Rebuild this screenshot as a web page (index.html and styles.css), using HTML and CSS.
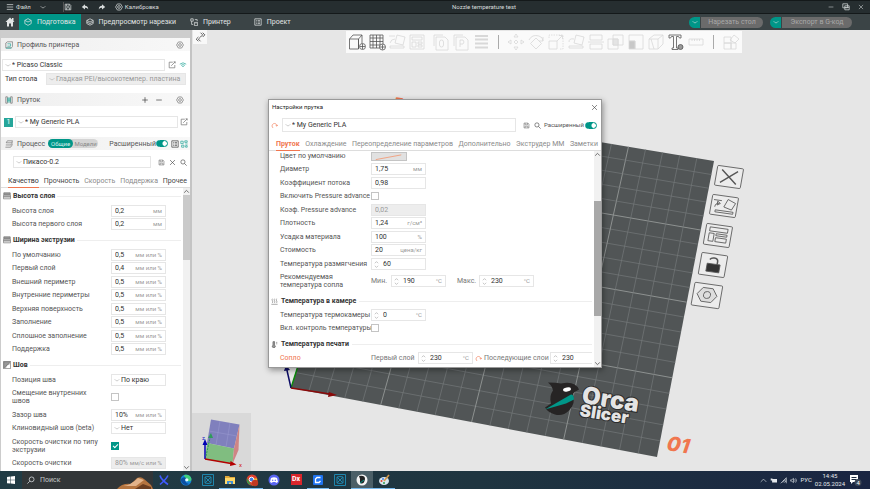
FILE: index.html
```html
<!DOCTYPE html>
<html lang="ru">

<head>
  <meta charset="UTF-8">
  <meta name="viewport" content="width=device-width, initial-scale=1.0">
  <title>Nozzle temperature test</title>
  <link rel="stylesheet" href="styles.css">
</head>

<body>

  <!-- общие иконки -->
  <svg class="defs" width="0" height="0">
    <symbol id="i-down" viewBox="0 0 10 10"><path d="M1 3.5 Q3 6.5 5 6.5 T9 3.5" /></symbol>
    <symbol id="i-gear" viewBox="0 0 10 10"><path d="M3 1.2h4L9.3 5 7 8.8H3L.7 5z" /><circle cx="5" cy="5" r="1.7" /></symbol>
    <symbol id="i-save" viewBox="0 0 10 10"><path d="M1.5 1.5h5.5l1.5 1.500v5.500h-7zM3 1.500v2.500h3.500v-2.500M3 8.500v-2.500h4v2.500" /></symbol>
    <symbol id="i-search" viewBox="0 0 10 10"><circle cx="4.200" cy="4.200" r="3" /><path d="M6.500 6.500L9.500 9.500" /></symbol>
    <symbol id="i-x" viewBox="0 0 10 10"><path d="M1.500 1.500l7 7M8.500 1.500l-7 7" /></symbol>
    <symbol id="i-edit" viewBox="0 0 10 10"><path d="M6 1.500H1.500v7h7V5M4 6L9 1M7 1h2v2" /></symbol>
    <symbol id="i-cube" viewBox="0 0 10 10"><path d="M5 .8L9 3v4L5 9.200 1 7V3zM1 3l4 2 4-2" /></symbol>
    <symbol id="i-layers" viewBox="0 0 10 10"><path d="M3 1h6.500L8 3.500H1.500zM1 6.200h6.500L9.500 3M.5 9h6.500L9.500 5.500" /></symbol>
    <symbol id="i-reset" viewBox="0 0 10 10"><path d="M3 8.500A3.500 3.500 0 1 1 8.500 5.500M6.500 4.500l2 1.500 1.200-2" /></symbol>
    <symbol id="i-spin" viewBox="0 0 6 10"><path d="M1 3.500l2-2 2 2M1 6.500l2 2 2-2" /></symbol>
    <symbol id="i-list" viewBox="0 0 10 10"><path d="M1 1h8v8H1zM2.500 3h1M4.500 3h3M2.500 5h1M4.500 5h3M2.500 7h1M4.500 7h3" /></symbol>
    <symbol id="i-rows" viewBox="0 0 10 10"><path class="fill" d="M1 1h8v2.500H1z" /><path d="M.5 4h9v2h-9zM.5 6h9v2.500h-9z" /></symbol>
  </svg>

  <header class="titlebar">
    <div class="titlebar-left">
      <button class="bar-btn"><svg class="icon" viewBox="0 0 10 10"><path d="M1 2h8M1 5h8M1 8h8" /></svg>Файл</button>
      <button class="bar-btn" aria-label="Меню"><svg class="icon icon-s"><use href="#i-down" /></svg></button>
      <span class="sep"></span>
      <button class="bar-btn" aria-label="Сохранить"><svg class="icon"><use href="#i-save" /></svg></button>
      <button class="bar-btn" aria-label="Отменить"><svg class="icon icon-fill" viewBox="0 0 10 10"><path d="M5 1.500L1 5l4 3V6q3-.5 4 2Q9 3.500 5 3.500z" /></svg></button>
      <button class="bar-btn" aria-label="Повторить"><svg class="icon icon-fill" viewBox="0 0 10 10"><path d="M5 1.500L9 5 5 8V6Q2 5.500 1 8 1 3.500 5 3.500z" /></svg></button>
      <button class="bar-btn calib"><svg class="icon"><use href="#i-gear" /></svg>Калибровка</button>
    </div>
    <div class="titlebar-name">Nozzle temperature test</div>
    <div class="titlebar-right">
      <button class="bar-btn" aria-label="Свернуть"><svg class="icon icon-s" viewBox="0 0 10 10"><path d="M1 5h8" /></svg></button>
      <button class="bar-btn" aria-label="Развернуть"><svg class="icon" viewBox="0 0 10 10"><path d="M1 1h6v5H1zM3.500 3.500H9V8.500H3.500zM3.500 5.500H9" /></svg></button>
      <button class="bar-btn" aria-label="Закрыть"><svg class="icon icon-s"><use href="#i-x" /></svg></button>
    </div>
  </header>

  <nav class="nav">
    <button class="nav-home" aria-label="Домой"><svg class="icon icon-l icon-fill" viewBox="0 0 10 10"><path d="M5 .5L.5 5H2v4.500h2V6.500h2v3h2V5h1.500L8.500 4V1H7v1.500z" /></svg></button>
    <button class="nav-tab active"><svg class="icon"><use href="#i-cube" /></svg>Подготовка</button>
    <button class="nav-tab"><svg class="icon" viewBox="0 0 10 10"><path d="M5 1l4 2-4 2-4-2zM1 5l4 2 4-2M1 7l4 2 4-2M1 3v4M9 3v4" /></svg>Предпросмотр нарезки</button>
    <button class="nav-tab nav-printer"><svg class="icon" viewBox="0 0 10 10"><path d="M1 1h3v3H1zM2 4v4h2M6 2h3v2M5.500 5.500h4v4h-4zM7 7h1" /></svg>Принтер</button>
    <button class="nav-tab nav-project"><svg class="icon"><use href="#i-list" /></svg>Проект</button>
    <div class="nav-actions">
      <div class="split"><button class="split-caret" aria-label="Режим нарезки"><svg class="icon icon-s"><use href="#i-down" /></svg></button><button class="split-main">Нарезать стол</button></div>
      <div class="split"><button class="split-caret" aria-label="Режим экспорта"><svg class="icon icon-s"><use href="#i-down" /></svg></button><button class="split-main split-wide">Экспорт в G-код</button></div>
    </div>
  </nav>

  <main class="main">

    <aside class="sidebar">
      <div class="sidebar-top"></div>

      <div class="panel-head">
        <svg class="icon" viewBox="0 0 10 10"><path d="M1 2.500L3 1h6.500v6L8 8.500H1z" /><path class="teal" d="M3 3.500h4v3H3M1 9h7" /></svg>
        <span class="panel-title">Профиль принтера</span>
        <button class="plain" aria-label="Настройки принтера"><svg class="icon"><use href="#i-gear" /></svg></button>
      </div>
      <div class="line line-printer">
        <div class="combo"><svg class="icon icon-s"><use href="#i-down" /></svg><select aria-label="Профиль принтера"><option>* Picaso Classic</option></select></div>
        <button class="plain" aria-label="Изменить"><svg class="icon"><use href="#i-edit" /></svg></button>
        <button class="plain" aria-label="Сеть"><svg class="icon" viewBox="0 0 10 10"><path class="teal" d="M1 4q4-3.500 8 0M2.500 5.500q2.500-2 5 0M4 7q1-1 2 0" /></svg></button>
      </div>
      <div class="line line-bed">
        <label for="bed">Тип стола</label>
        <div class="combo disabled"><svg class="icon icon-s"><use href="#i-down" /></svg><select id="bed" disabled><option>Гладкая PEI/высокотемпер. пластина</option></select></div>
      </div>

      <div class="panel-head">
        <svg class="icon" viewBox="0 0 10 10"><path d="M1 1h2v8H1zM7 1h2v8H7z" /><path class="teal" d="M3.500 2.500h3v5h-3zM3.500 4h3M3.500 5.500h3" /></svg>
        <span class="panel-title">Пруток</span>
        <button class="plain" aria-label="Добавить"><svg class="icon dark" viewBox="0 0 10 10"><path d="M5 1.500v7M1.500 5h7" /></svg></button>
        <button class="plain plain-gap" aria-label="Удалить"><svg class="icon dark" viewBox="0 0 10 10"><path d="M1.500 5h7" /></svg></button>
        <button class="plain" aria-label="Настройки прутка"><svg class="icon"><use href="#i-gear" /></svg></button>
      </div>
      <div class="line line-filament">
        <span class="badge">1</span>
        <div class="combo"><svg class="icon icon-s"><use href="#i-down" /></svg><select aria-label="Пруток"><option>* My Generic PLA</option></select></div>
        <button class="plain" aria-label="Изменить"><svg class="icon"><use href="#i-edit" /></svg></button>
      </div>

      <div class="panel-head panel-process">
        <svg class="icon"><use href="#i-layers" /></svg>
        <span class="process-title">Процесс</span>
        <div class="segment"><button class="on">Общие</button><button>Модели</button></div>
        <label class="adv-label" for="adv">Расширенный</label>
        <input class="toggle" type="checkbox" id="adv" checked>
        <svg class="icon dark"><use href="#i-list" /></svg>
        <svg class="icon" viewBox="0 0 10 10"><path class="teal" d="M1 1.500h3v3H1zM6 1h3v2H6zM2 6.500h3v2.500H2zM6.500 5h3M7 7h2v2H7z" /></svg>
      </div>
      <div class="line line-process">
        <div class="combo"><svg class="icon icon-s"><use href="#i-down" /></svg><select aria-label="Профиль процесса"><option>Пикасо-0.2</option></select></div>
        <button class="plain" aria-label="Сохранить"><svg class="icon icon-m"><use href="#i-save" /></svg></button>
        <button class="plain" aria-label="Удалить"><svg class="icon icon-m dark"><use href="#i-x" /></svg></button>
        <button class="plain" aria-label="Поиск"><svg class="icon icon-m dark"><use href="#i-search" /></svg></button>
      </div>

      <div class="tabs">
        <button class="tab active">Качество</button>
        <button class="tab strong">Прочность</button>
        <button class="tab">Скорость</button>
        <button class="tab">Поддержка</button>
        <button class="tab strong">Прочее</button>
      </div>

      <div class="scroll">
        <div class="scroll-body">
          <h3 class="group"><svg class="icon"><use href="#i-rows" /></svg>Высота слоя</h3>
          <div class="fields">
            <div class="field"><label for="q1">Высота слоя</label><div class="box"><input id="q1" value="0,2"><span>мм</span></div></div>
            <div class="field"><label for="q2">Высота первого слоя</label><div class="box"><input id="q2" value="0,2"><span>мм</span></div></div>
          </div>

          <h3 class="group"><svg class="icon"><use href="#i-rows" /></svg>Ширина экструзии</h3>
          <div class="fields">
            <div class="field"><label for="w1">По умолчанию</label><div class="box"><input id="w1" value="0,5"><span>мм или %</span></div></div>
            <div class="field"><label for="w2">Первый слой</label><div class="box"><input id="w2" value="0,4"><span>мм или %</span></div></div>
            <div class="field"><label for="w3">Внешний периметр</label><div class="box"><input id="w3" value="0,5"><span>мм или %</span></div></div>
            <div class="field"><label for="w4">Внутренние периметры</label><div class="box"><input id="w4" value="0,5"><span>мм или %</span></div></div>
            <div class="field"><label for="w5">Верхняя поверхность</label><div class="box"><input id="w5" value="0,5"><span>мм или %</span></div></div>
            <div class="field"><label for="w6">Заполнение</label><div class="box"><input id="w6" value="0,5"><span>мм или %</span></div></div>
            <div class="field"><label for="w7">Сплошное заполнение</label><div class="box"><input id="w7" value="0,5"><span>мм или %</span></div></div>
            <div class="field"><label for="w8">Поддержка</label><div class="box"><input id="w8" value="0,5"><span>мм или %</span></div></div>
          </div>

          <h3 class="group"><svg class="icon" viewBox="0 0 10 10"><path class="fill" d="M1 1h8L1 9z" /><path d="M.5 .5h9v9h-9zM3 9q0-4 6-6" /></svg>Шов</h3>
          <div class="fields">
            <div class="field"><label for="s1">Позиция шва</label><div class="combo"><svg class="icon icon-s"><use href="#i-down" /></svg><select id="s1"><option>По краю</option></select></div></div>
            <div class="field tall"><label for="s2">Смещение внутренних швов</label><input class="check" type="checkbox" id="s2"></div>
            <div class="field"><label for="s3">Зазор шва</label><div class="box"><input id="s3" value="10%"><span>мм или %</span></div></div>
            <div class="field"><label for="s4">Клиновидный шов (beta)</label><div class="combo"><svg class="icon icon-s"><use href="#i-down" /></svg><select id="s4"><option>Нет</option></select></div></div>
            <div class="field tall"><label for="s5">Скорость очистки по типу экструзии</label><input class="check" type="checkbox" id="s5" checked></div>
            <div class="field"><label for="s6">Скорость очистки</label><div class="box disabled"><input id="s6" value="80%" disabled><span>мм/с или %</span></div></div>
          </div>
        </div>
        <div class="scrollbar">
          <svg viewBox="0 0 6 6"><path d="M1 4l2-2 2 2" /></svg>
          <div class="thumb"></div>
          <svg class="arrow-end" viewBox="0 0 6 6"><path d="M1 2l2 2 2-2" /></svg>
        </div>
      </div>
    </aside>

    <section class="viewport">
      <svg class="scene" viewBox="192 30 678 441" preserveAspectRatio="xMinYMin slice">
        <path class="plate" d="M291 388L657 457 714 161 378 105z" />
        <g id="grid"></g>

        <!-- оси -->
        <path d="M291 388L298 366" stroke="#0b8a0b" stroke-width="1.500" />
        <path d="M291 388L286 366" stroke="#0c0c66" stroke-width="1.500" />
        <path d="M284 371l2-6 4 5z" fill="#0c0c66" />
        <path d="M291 388L330 394" stroke="#8b0a0a" stroke-width="1.500" />
        <path d="M329 392l8 3-9 2z" fill="#8b0a0a" />

        <!-- логотип -->
        <path d="M548 382.500q8 0 13 1 14-3 18 6-4 2-6 4 3 10-4 17-6 6-14 4-7-2-10-7l6-4q-2-8 2-13-1-5-5-8z" fill="#262424" />
        <path d="M545 409.500l26-15q3 0 3 5l-8 4z" fill="#009688" />
        <ellipse cx="567" cy="389.500" rx="4" ry="2" transform="rotate(-10 567 389.500)" fill="#fff" />
        <g class="brand">
          <text x="581" y="403" font-size="24" transform="rotate(9 581 403)">Orca</text>
          <text x="579" y="416" font-size="17" transform="rotate(9 579 416)">Slicer</text>
        </g>
        <text class="plate-no" x="666" y="450" transform="rotate(9 666 450)">01</text>
        <text class="plate-name" x="393" y="107" transform="rotate(8 393 107)">Бе</text>

        <!-- кнопки стола -->
        <g class="plate-btn" transform="translate(729 177) rotate(8) skewX(-2)">
          <rect x="-13" y="-10" width="26" height="20" rx="1" /><path d="M-8-6.500L8 6.500M8-6.500L-8 6.500" stroke-width="1.400" />
        </g>
        <g class="plate-btn" transform="translate(724 206) rotate(8) skewX(-2)">
          <rect x="-13" y="-10" width="26" height="20" rx="1" /><path d="M0 1L3-7 11-4 8 3zM-8 5h18v2H-8zM-11-5h8M-9 2q0-4 4-4M-7-4l3 2-3 2z" />
        </g>
        <g class="plate-btn" transform="translate(718 235) rotate(8) skewX(-2)">
          <rect x="-13" y="-10" width="26" height="21" rx="1" /><path d="M-9-7H9v4H-9zM-9-1h5v8h-5zM-2-1H9v2H-2zM-2 3H9v4H-2z" />
        </g>
        <g class="plate-btn" transform="translate(713 265) rotate(8) skewX(-2)">
          <rect x="-13" y="-11" width="26" height="22" rx="1" /><path d="M-6-1H7v8H-6z" fill="#333" /><path d="M4-1v-3q0-3-4-3-3 0-4 2" stroke-width="1.500" />
        </g>
        <g class="plate-btn" transform="translate(707 295) rotate(8) skewX(-2)">
          <rect x="-14" y="-11" width="28" height="23" rx="1" /><path d="M-5-7H5L10 0 5 7H-5L-10 0z" fill="#ddd" /><circle r="3.500" />
        </g>

        <!-- кубик навигации -->
        <path d="M192 413h59v58h-59z" fill="#d9d9d9" />
        <path d="M211 419.500L239.500 424.500 234 448.500 207 443z" fill="#8080bd" />
        <path d="M207 443L234 448.500 232.500 464 205 459z" fill="#80bd80" />
        <path d="M239.500 424.500L234 448.500 232.500 464 238.500 450z" fill="#cf8585" />
        <path d="M209 431l28 5M220 421l-4 24M230 423l-4 24" stroke="#9a9ad0" stroke-width=".5" />
        <path d="M205 459V443" stroke="#0000b4" stroke-width="1.500" /><path d="M202.500 445l2.500-6 2.500 6z" fill="#0000b4" />
        <path d="M205 459L231 463.500" stroke="#b40000" stroke-width="1.500" /><path d="M230.500 461l6 3.500-6.500 1.500z" fill="#b40000" />
        <path d="M206 456l4-18" stroke="#2f9a5a" stroke-dasharray="2 1" /><path d="M208 438l3-5 2 5z" fill="#2f9a5a" />
        <text x="202" y="440" font-size="6" fill="#2222c8">z</text>
        <text x="239" y="467" font-size="6" fill="#d22222">x</text>
      </svg>

      <button class="collapse" aria-label="Свернуть панель"><svg viewBox="0 0 13 13"><path d="M5 6.500L3 8.500l2 2M7 6.500l-2 2 2 2M7 2.500l2 2-2 2M9 2.500l2 2-2 2" /></svg></button>

      <div class="toolbar">
        <svg class="on" viewBox="0 0 20 20"><path d="M2.500 7h9v10h-9zM2.500 7L6 3h9l-3.500 4M15 3v9M11.500 17V7" /><circle cx="15.500" cy="14.500" r="3" fill="#fafafa" /><path d="M13 14.500h5M15.500 12v5" /></svg>
        <svg class="on" viewBox="0 0 20 20"><path d="M3 3h13v13H3zM6 3v13M9.500 3v13M13 3v13M3 6h13M3 9.500h13M3 13h13" /><circle cx="15.500" cy="15" r="3" fill="#fafafa" /><path d="M13 15h5M15.500 12.500v5" /></svg>
        <svg viewBox="0 0 20 20"><path d="M8 11L10 3l8 2-2 8zM3 14h14v2H3zM2 4h6M3 11q1-4 5-4" /></svg>
        <svg viewBox="0 0 20 20"><path d="M3 3h14v14H3zM5 5h10v3H5zM5 10h4v5H5zM11 10h4v2h-4zM11 13h4v2h-4z" /></svg>
        <svg class="tb-gap" viewBox="0 0 20 20"><path d="M3 14V3h9M5 5h9l3 3v10H5z" /><rect x="8.500" y="8" width="4" height="7" rx="2" /></svg>
        <svg viewBox="0 0 20 20"><path d="M3 14V3h9M5 5h9l3 3v10H5zM9 15V8h3q2 2 0 4H9" /></svg>
        <svg viewBox="0 0 20 20"><path d="M4 4h13M4 7.500h13M4 11.500h13M4 15.500h13" stroke-width="2" /></svg>
        <span class="tb-sep"></span>
        <svg viewBox="0 0 20 20"><path d="M10 8l2 2-2 2-2-2zM10 2l2 3H8zM10 18l2-3H8zM2 10l3-2v4zM18 10l-3-2v4z" /></svg>
        <svg viewBox="0 0 20 20"><path d="M10 6l5.500 5.500L10 17l-5.500-5.500zM3 8q3-6 10-4M17 5v4h-4M17 9q0-4-4-5" /></svg>
        <svg viewBox="0 0 20 20"><path d="M3 9h8v8H3zM11 9l5-5M13 3.500h3.500V7" /><path d="M3 6V3h14v14h-3" stroke-dasharray="1.500 1" /></svg>
        <svg viewBox="0 0 20 20"><path d="M8 11L10 3l8 2-2 8zM3 14h14v2H3zM3 10q0-4 5-3" /></svg>
        <svg viewBox="0 0 20 20"><path d="M4 3h12v5H4zM4 12h12v5H4zM2 10h16" /></svg>
        <svg viewBox="0 0 20 20"><path d="M2 7h10v10H2zM7 3h10v10H7z" /><path d="M7 7h5v6H7z" fill="#e4e4e4" /></svg>
        <svg viewBox="0 0 20 20"><path d="M3 3h14v14h-8V9H3z" /><path d="M3 9h6v8H3z" fill="#c8c8c8" /></svg>
        <svg viewBox="0 0 20 20"><path d="M3 7h9v10H3zM3 7l5-4h9l-5 4M17 3v9l-5 5M5 7l3 10" /></svg>
        <svg class="on" viewBox="0 0 20 20"><path d="M3 3h12v3h-1.500l-1-1.500H10.500V16H12v1.500H6V16h1.500V4.500H5.500L4.500 6H3z" /><circle cx="14.500" cy="15" r="2.500" fill="#999" /></svg>
        <svg viewBox="0 0 20 20"><path d="M3 7h14v6H3zM6 7v2M8.500 7v2M11 7v2M13.500 7v2" /></svg>
        <span class="tb-sep"></span>
        <svg viewBox="0 0 20 20"><path d="M3 5h7v6H3zM3 11h7v6H3zM10 11h5v6h-5zM9 8l4-5 5 4-4 4z" /></svg>
      </div>
    </section>
  </main>

  <section class="dialog" role="dialog" aria-labelledby="dlg-title">
    <div class="dialog-title">
      <span id="dlg-title">Настройки прутка</span>
      <button class="plain" aria-label="Закрыть"><svg class="icon icon-m dark"><use href="#i-x" /></svg></button>
    </div>
    <div class="dialog-preset">
      <svg class="icon icon-m reset"><use href="#i-reset" /></svg>
      <div class="combo"><svg class="icon icon-s"><use href="#i-down" /></svg><select aria-label="Профиль прутка"><option>* My Generic PLA</option></select></div>
      <button class="plain" aria-label="Сохранить"><svg class="icon icon-m"><use href="#i-save" /></svg></button>
      <button class="plain" aria-label="Поиск"><svg class="icon icon-m dark"><use href="#i-search" /></svg></button>
      <label for="adv2">Расширенный</label>
      <input class="toggle" type="checkbox" id="adv2" checked>
    </div>
    <div class="tabs dialog-tabs">
      <button class="tab active">Пруток</button>
      <button class="tab">Охлаждение</button>
      <button class="tab">Переопределение параметров</button>
      <button class="tab">Дополнительно</button>
      <button class="tab">Экструдер ММ</button>
      <button class="tab">Заметки</button>
    </div>
    <div class="scroll">
      <div class="scroll-body">
        <div class="fields">
          <div class="field"><label for="f0">Цвет по умолчанию</label><button class="swatch" id="f0"><svg viewBox="0 0 36 9"><path d="M4 7L31 2" /></svg></button></div>
          <div class="field"><label for="f1">Диаметр</label><div class="box"><input id="f1" value="1,75"><span>мм</span></div></div>
          <div class="field"><label for="f2">Коэффициент потока</label><div class="box"><input id="f2" value="0,98"></div></div>
          <div class="field"><label for="f3">Включить Pressure advance</label><input class="check" type="checkbox" id="f3"></div>
          <div class="field"><label for="f4">Коэф. Pressure advance</label><div class="box disabled"><input id="f4" value="0,02" disabled></div></div>
          <div class="field"><label for="f5">Плотность</label><div class="box"><input id="f5" value="1,24"><span>г/см³</span></div></div>
          <div class="field"><label for="f6">Усадка материала</label><div class="box"><input id="f6" value="100"><span>%</span></div></div>
          <div class="field"><label for="f7">Стоимость</label><div class="box"><input id="f7" value="20"><span>цена/кг</span></div></div>
          <div class="field"><label for="f8">Температура размягчения</label><div class="box"><svg class="spin"><use href="#i-spin" /></svg><input id="f8" value="60"></div></div>
          <div class="field tall">
            <span class="field-name">Рекомендуемая температура сопла</span>
            <label class="sub sub-min" for="f9">Мин.</label><div class="box"><svg class="spin"><use href="#i-spin" /></svg><input id="f9" value="190"><span>°C</span></div>
            <label class="sub sub-max" for="f10">Макс.</label><div class="box"><svg class="spin"><use href="#i-spin" /></svg><input id="f10" value="230"><span>°C</span></div>
          </div>
        </div>
        <h3 class="group"><svg class="icon icon-m" viewBox="0 0 10 10"><path d="M2 1q-1 1.500 0 3t0 3M5 1q-1 1.500 0 3t0 3M8 1q-1 1.500 0 3t0 3M.5 9h9" /></svg>Температура в камере</h3>
        <div class="fields">
          <div class="field"><label for="c1">Температура термокамеры</label><div class="box"><svg class="spin"><use href="#i-spin" /></svg><input id="c1" value="0"><span>°C</span></div></div>
          <div class="field"><label for="c2">Вкл. контроль температуры</label><input class="check" type="checkbox" id="c2"></div>
        </div>
        <h3 class="group"><svg class="icon icon-m" viewBox="0 0 10 10"><path class="fill" d="M3 1h2v5a2 2 0 1 1-2 0z" /><path d="M3 1h2v5a2 2 0 1 1-2 0zM7 2h2M7 4h2" /></svg>Температура печати</h3>
        <div class="fields">
          <div class="field">
            <span class="field-name changed">Сопло</span>
            <label class="sub sub-first" for="n1">Первый слой</label><div class="box"><svg class="spin"><use href="#i-spin" /></svg><input id="n1" value="230"><span>°C</span></div>
            <svg class="icon icon-m reset"><use href="#i-reset" /></svg>
            <label class="sub sub-next" for="n2">Последующие слои</label><div class="box box-rest"><svg class="spin"><use href="#i-spin" /></svg><input id="n2" value="230"></div>
          </div>
        </div>
      </div>
      <div class="scrollbar">
        <svg viewBox="0 0 6 6"><path d="M1 4l2-2 2 2" /></svg>
        <div class="thumb"></div>
        <svg class="arrow-end" viewBox="0 0 6 6"><path d="M1 2l2 2 2-2" /></svg>
      </div>
    </div>
  </section>

  <footer class="taskbar">
    <button class="task start" aria-label="Пуск"><svg viewBox="0 0 10 10"><path fill="#fff" d="M1 2l3.500-.5v3.300H1zM5 1.400L9 1v3.800H5zM1 5.300h3.500v3.300L1 8.200zM5 5.300h4V9l-4-.4z" /></svg></button>
    <div class="search">
      <svg class="icon flip"><use href="#i-search" /></svg>
      <input type="text" placeholder="Поиск" aria-label="Поиск">
      <svg class="search-art" viewBox="0 0 36 13"><path fill="#b5743f" d="M0 13Q5 7 14 8L20 2q4-2 7 1l7 6 2 4z" /><path fill="#e3b38a" d="M6 10q8-1 15-8l6 2-8 6z" /><path fill="#6b3d20" d="M18 13l8-5 8 3v2z" /></svg>
    </div>
    <button class="task" aria-label="X"><svg viewBox="0 0 14 14"><path d="M3 2.500q1 4 8 9M11 2.500q-2 4-8 9" stroke="#3f5bff" stroke-width="1.600" fill="none" /></svg></button>
    <button class="task" aria-label="Edge"><svg viewBox="0 0 14 14"><circle cx="7" cy="7" r="5.500" fill="#1583d8" /><path fill="#42d07a" d="M5 2q6-1 7.500 4 0 3-4 2Q9 5 6 5z" /><path fill="#0c4fa0" d="M2 6q3-3 5-1-3 4 3 6-5 3-8-3z" /><circle cx="7.800" cy="6.800" r="1.600" fill="#e9f8ff" /></svg></button>
    <button class="task" aria-label="3D"><svg viewBox="0 0 14 14"><path d="M1.500 1.500h11v11h-11zM4 4q3-1 6 0v6q-3 1-6 0zM4 4l6 6M10 4l-6 6" stroke="#1f86ad" fill="none" /></svg></button>
    <button class="task open" aria-label="Проводник"><svg viewBox="0 0 14 14"><path fill="#e0a83a" d="M2 3h4l1 1h5v7H2z" /><path fill="#ffd869" d="M2 5h10v6H2z" /><path fill="#3f8fd6" d="M4 8h6v3H8V9.500H6V11H4z" /></svg></button>
    <button class="task open" aria-label="Chrome"><svg viewBox="0 0 14 14"><circle cx="7" cy="7" r="5.500" fill="#e0412f" /><path fill="#2f9e4f" d="M2 5l4 7q-5-1-4-7z" /><path fill="#f5c52f" d="M7 12.500q6-1 5-7H8z" /><circle cx="6.500" cy="6.500" r="2.300" fill="#3f7fe8" stroke="#fff" /><circle cx="10" cy="10" r="3.200" fill="#c03a24" /></svg></button>
    <button class="task" aria-label="Discord"><svg viewBox="0 0 14 14"><circle cx="7" cy="7" r="5.500" fill="#5865f2" /><path fill="#fff" d="M4 5q3-1.500 6 0l1 4-2 1-.5-1h-3L5 10 3 9z" /><circle cx="5.700" cy="7.300" r=".7" fill="#5865f2" /><circle cx="8.300" cy="7.300" r=".7" fill="#5865f2" /></svg></button>
    <button class="task"><span class="dx">Dx</span></button>
    <button class="task open" aria-label="C"><svg viewBox="0 0 14 14"><rect x="2" y="2" width="10" height="10" rx="1" fill="#1f74f0" /><path d="M9.500 4.500H6L4.500 6v3.500H8L9.500 8" stroke="#fff" stroke-width="1.300" fill="none" /></svg></button>
    <button class="task" aria-label="3D"><svg viewBox="0 0 14 14"><path d="M1.500 1.500h11v11h-11zM4 4q3-1 6 0v6q-3 1-6 0zM4 4l6 6M10 4l-6 6" stroke="#1f86ad" fill="none" /></svg></button>
    <button class="task open current" aria-label="OrcaSlicer"><svg viewBox="0 0 14 14"><circle cx="7" cy="7" r="5.500" fill="#f4f4f4" /><path fill="#222" d="M4 3q6-1 6 3-1 6-5 4 0-2 0-4z" /><path d="M5 10l4-3" stroke="#009688" /></svg></button>
    <button class="task open" aria-label="Paint"><svg viewBox="0 0 14 14"><ellipse cx="7" cy="8" rx="5" ry="4" fill="#d8e6ef" /><circle cx="4.500" cy="8" r="1" fill="#e0412f" /><circle cx="7" cy="10" r="1" fill="#2f9e4f" /><circle cx="6" cy="6" r="1" fill="#3f7fe8" /><path d="M7 8l5-6" stroke="#d79a4a" stroke-width="1.600" /></svg></button>
    <div class="tray">
      <svg class="icon icon-m" viewBox="0 0 10 10"><path d="M1 7l4-4 4 4" /></svg>
      <svg class="icon icon-m icon-fill" viewBox="0 0 10 10"><path d="M1 2h2l1 1h6v5H3V5H1z" /></svg>
      <svg class="icon icon-m" viewBox="0 0 10 10"><path d="M1 9L9 1v8M4 8q0-4 5-4M6.500 8q0-2 2.500-2" /></svg>
      <svg class="icon icon-m" viewBox="0 0 10 10"><path d="M1 4h1.500L5 2v6L2.500 6H1zM6.500 3.500q1.500 1.500 0 3M8 2q2.500 3 0 6" /></svg>
      <span>РУС</span>
      <span class="clock">14:45<br>02.05.2024</span>
      <svg class="note" viewBox="0 0 14 14"><path fill="#fff" d="M2 2h8v7H5l-2 2V9H2z" /><path d="M3.500 4.500h5M3.500 6.500h5" stroke="#1c2a40" /><circle cx="10" cy="9.500" r="3.500" fill="#3c4757" /><text x="8.500" y="12" font-size="6" fill="#fff">4</text></svg>
    </div>
  </footer>

  <script src="script.js"></script>
</body>

</html>
```
FILE: styles.css
```css
* {
  box-sizing: border-box;
}

body {
  margin: 0;
  height: 100vh;
  display: flex;
  flex-direction: column;
  overflow: hidden;
  font-family: Roboto, "Noto Sans", sans-serif;
  font-size: 7px;
  line-height: 8px;
  color: #555;
  background: #e6e6e6;
}

button,
input,
select {
  font: inherit;
  color: inherit;
  background: none;
  border: 0;
  margin: 0;
  padding: 0;
}

.defs {
  position: absolute;
}

.icon {
  width: 8px;
  height: 8px;
  flex: none;
  fill: none;
  stroke: currentColor;
  stroke-width: 0.9;
  display: block;
}

.icon-s {
  width: 6px;
  height: 6px;
}

.icon-m {
  width: 7px;
  height: 7px;
}

.icon-l {
  width: 10px;
  height: 10px;
}

.icon-fill {
  fill: currentColor;
  stroke: none;
}

.fill {
  fill: #999;
}

.teal {
  stroke: #2aa79b;
}

.dark {
  color: #444;
}

.reset {
  color: #f0764f;
}

.plain {
  display: flex;
  flex: none;
  color: #777;
}

/* title bar */
.titlebar {
  flex: none;
  height: 14px;
  display: grid;
  grid-template-columns: 1fr auto 1fr;
  align-items: center;
  background: #262e30;
  border-top: 1px solid #14191a;
  border-bottom: 1px solid #14191a;
  color: #d8dcdc;
  font-size: 6px;
}

.titlebar-left,
.titlebar-right {
  display: flex;
  align-items: center;
}

.titlebar-left {
  padding-left: 6px;
  gap: 9px;
}

.titlebar-right {
  justify-content: flex-end;
  gap: 8px;
  padding-right: 6px;
}

.titlebar-name {
  padding-left: 98px;
}

.bar-btn {
  display: flex;
  align-items: center;
  gap: 2px;
}

.sep {
  width: 1px;
  height: 10px;
  margin: 0 -9px 0 8px;
  background: #555;
}

/* main tabs */
.nav {
  flex: none;
  height: 16px;
  display: flex;
  align-items: stretch;
  background: #3b4446;
  color: #e2e5e5;
}

.nav-home {
  width: 19px;
  display: flex;
  align-items: center;
  justify-content: center;
}

.nav-tab {
  display: flex;
  align-items: center;
  gap: 5px;
  padding: 0 5px;
}

.nav-tab.active {
  background: #009688;
}

.nav-printer {
  padding-left: 9px;
}

.nav-project {
  padding-left: 18px;
}

.nav-actions {
  margin-left: auto;
  display: flex;
  align-items: center;
  gap: 7px;
  padding-right: 18px;
}

.split {
  display: flex;
  height: 11px;
  border-radius: 6px;
  overflow: hidden;
  gap: 1px;
}

.split-caret {
  width: 11px;
  display: flex;
  align-items: center;
  justify-content: center;
  background: #009688;
}

.split-main {
  width: 62px;
  background: #6b6b6b;
  color: #a9a9a9;
}

.split-wide {
  width: 70px;
}

/* layout */
.main {
  flex: 1;
  min-height: 0;
  display: flex;
}

.sidebar {
  flex: none;
  width: 192px;
  display: flex;
  flex-direction: column;
  background: #fff;
  border-left: 1px solid #ccc;
  border-right: 2px solid #c4c4c4;
}

.sidebar-top {
  height: 8px;
  background: #cdcdcd;
}

.panel-head {
  display: flex;
  align-items: center;
  height: 13px;
  padding: 0 6px 0 4px;
  background: linear-gradient(90deg, #efefef, #f8f8f8);
}

.panel-head .icon {
  color: #777;
}

.panel-head .dark {
  color: #444;
}

.panel-title {
  flex: 1;
  padding-left: 4px;
}

.plain-gap {
  margin: 0 13px 0 6px;
}

.line {
  display: flex;
  align-items: center;
}

.line-printer {
  margin: 8px 3px 0 1px;
  gap: 3px;
}

.line-bed {
  margin: 2px 4px 8px;
}

.line-bed label {
  width: 41px;
  color: #333;
}

.line-filament {
  margin: 10px 2px 9px 3px;
  gap: 2px;
}

.line-process {
  margin: 6px 3px 0 12px;
  gap: 4px;
}

.line-process .combo {
  margin-right: 3px;
}

.badge {
  width: 9px;
  height: 9px;
  background: #26a69a;
  color: #fff;
  text-align: center;
}

.process-title {
  padding: 0 3px 0 4px;
}

.panel-process {
  padding-right: 2px;
}

.panel-process .icon + .icon {
  margin-left: 1px;
}

.segment {
  display: flex;
  height: 9px;
  border-radius: 5px;
  background: #d4d4d4;
  font-size: 6px;
}

.segment button {
  width: 25px;
  color: #888;
}

.segment .on {
  border-radius: 5px;
  background: #009688;
  color: #d8f0ee;
}

.adv-label {
  margin-left: auto;
}

.toggle {
  appearance: none;
  flex: none;
  width: 12px;
  height: 7px;
  margin-right: 3px;
  border: 1px solid #009688;
  border-radius: 4px;
  background: radial-gradient(circle at 8px 50%, #fff 2px, #009688 3px);
}

.combo,
.box {
  display: flex;
  align-items: center;
  height: 12px;
  border: 1px solid #e6e6e6;
  background: #fff;
  color: #333;
}

.combo {
  flex: 1;
  min-width: 0;
  padding-left: 2px;
}

.combo .icon {
  color: #aaa;
}

.combo select {
  appearance: none;
  flex: 1;
  min-width: 0;
  height: 10px;
  padding-left: 1px;
}

.combo.disabled,
.box.disabled {
  background: #ededed;
  color: #999;
}

.disabled select,
.disabled input {
  opacity: 1;
}

.tabs {
  display: flex;
  justify-content: space-between;
  height: 13px;
  margin-top: 7px;
  padding: 0 3px 0 7px;
  border-bottom: 1px solid #ddd;
}

.tab {
  height: 13px;
  color: #8a8a8a;
  border-bottom: 1px solid transparent;
}

.tab.strong {
  color: #444;
}

.tab.active {
  color: #333;
  border-color: #f0764f;
}

.scroll {
  flex: 1;
  min-height: 0;
  display: flex;
}

.scroll-body {
  flex: 1;
  min-width: 0;
  overflow: hidden;
  padding: 3px 2px 0;
}

.scrollbar {
  width: 7px;
  display: flex;
  flex-direction: column;
  background: #f1f1f1;
}

.scrollbar svg {
  width: 7px;
  height: 7px;
  fill: none;
  stroke: #666;
  stroke-width: 0.8;
}

.arrow-end {
  margin-top: auto;
}

.sidebar .thumb {
  height: 65px;
  background: #cacaca;
}

/* option groups */
.group {
  display: flex;
  align-items: center;
  gap: 2px;
  height: 10px;
  margin: 0 0 4px;
  font-size: 7px;
  font-weight: 700;
  color: #333;
}

.group::after {
  content: "";
  flex: 1;
  height: 1px;
  background: #eee;
}

.group .icon {
  color: #777;
}

.fields {
  padding-left: 9px;
  margin-bottom: 5px;
}

.field {
  display: flex;
  align-items: center;
  height: 12px;
  margin-bottom: 1px;
}

.field:nth-child(even) {
  margin-bottom: 2px;
}

.field.tall {
  height: 20px;
}

.field > label,
.field-name {
  flex: none;
  width: 99px;
  white-space: nowrap;
}

.tall > label,
.tall .field-name {
  white-space: normal;
}

.sidebar .tall label {
  padding-right: 8px;
}

.field .box,
.field .combo {
  flex: none;
  width: 55px;
}

.box {
  padding: 0 3px;
}

.box input {
  flex: 1;
  width: 0;
  min-width: 0;
  outline: 0;
}

.box span {
  flex: none;
  font-size: 6px;
  color: #999;
}

.check {
  appearance: none;
  width: 8px;
  height: 8px;
  border: 1px solid #c4c4c4;
  background: #fff;
}

.check:checked {
  border-color: #009688;
  background: #009688;
  position: relative;
}

.check:checked::after {
  content: "";
  position: absolute;
  left: 1px;
  top: 1px;
  width: 4px;
  height: 2px;
  border-left: 1px solid #fff;
  border-bottom: 1px solid #fff;
  transform: rotate(-45deg);
}

/* 3d view */
.viewport {
  flex: 1;
  min-width: 0;
  position: relative;
  overflow: hidden;
}

.scene {
  display: block;
  width: 100%;
  height: 100%;
  fill: none;
}

.plate {
  fill: #515556;
}

.grid-line {
  stroke: #74787a;
  stroke-width: 0.7;
}

.grid-line.major {
  stroke: #8d9190;
  stroke-width: 1;
}

.brand {
  font-family: Inter, sans-serif;
  font-weight: 900;
  fill: #e4e4e4;
  stroke: #2c2c2c;
  stroke-width: 2px;
  paint-order: stroke;
}

.plate-no,
.plate-name {
  font-family: Inter, sans-serif;
  font-weight: 800;
  font-style: italic;
  font-size: 20px;
  fill: #f0764f;
}

.plate-name {
  font-size: 14px;
}

.plate-btn {
  stroke: #555;
  stroke-width: 0.8;
  fill: none;
}

.plate-btn rect {
  fill: #ececec;
}

.collapse {
  position: absolute;
  left: 1px;
  top: 0;
  background: #f8f8f8;
}

.collapse svg {
  display: block;
  width: 14px;
  height: 14px;
  fill: none;
  stroke: #333;
  stroke-width: 0.7;
}

.toolbar {
  position: absolute;
  left: 154px;
  top: 1px;
  display: flex;
  align-items: center;
  height: 22px;
  padding: 0 1px;
  background: #fafafa;
}

.toolbar svg {
  width: 20px;
  height: 20px;
  fill: none;
  stroke: #d8d8d8;
  stroke-width: 0.8;
}

.toolbar .on {
  stroke: #555;
}

.toolbar .tb-gap {
  margin-left: 4px;
}

.tb-sep {
  width: 1px;
  height: 14px;
  margin: 0 7px;
  background: #aaa;
}

/* filament dialog */
.dialog {
  position: absolute;
  left: 50%;
  top: 99px;
  width: 334px;
  height: 269px;
  transform: translateX(-50%);
  display: flex;
  flex-direction: column;
  background: #fff;
  border: 1px solid #999;
  box-shadow: 1px 2px 6px rgba(0, 0, 0, 0.4);
}

.dialog-title {
  display: flex;
  align-items: center;
  justify-content: space-between;
  height: 14px;
  padding: 0 3px;
  font-size: 6px;
  color: #222;
}

.dialog-preset {
  display: flex;
  align-items: center;
  gap: 4px;
  margin-top: 4px;
  padding: 0 4px 0 2px;
  font-size: 6px;
}

.dialog-preset .combo {
  height: 14px;
  margin-right: 3px;
  font-size: 7px;
}

.dialog-preset label {
  margin-left: -1px;
}

.dialog-preset .toggle {
  margin: 0 0 0 -3px;
}

.dialog-tabs {
  margin-top: 6px;
  padding: 0 3px 0 7px;
}

.dialog-tabs .active {
  color: #f0764f;
  font-weight: 700;
}

.dialog .scroll-body {
  padding: 0 2px;
}

.dialog .fields:first-child {
  margin-top: -1px;
}

.dialog .group {
  gap: 3px;
  margin-bottom: 3px;
}

.dialog .field > label,
.dialog .field-name {
  width: 91px;
}

.dialog .changed {
  color: #f0764f;
}

.dialog .field > .sub {
  width: auto;
  color: #777;
}

.dialog .field > .sub-min {
  width: 20px;
}

.dialog .field > .sub-max {
  width: 22px;
  margin-left: 11px;
}

.dialog .field > .sub-first {
  width: 47px;
}

.dialog .field > .sub-next {
  width: 66px;
  margin-left: 2px;
}

.field .reset {
  margin-left: 2px;
}

.field .box-rest {
  flex: 1;
  width: auto;
  border-right: 0;
}

.spin {
  flex: none;
  width: 5px;
  height: 9px;
  margin: 0 4px 0 -1px;
  fill: none;
  stroke: #bbb;
}

.swatch {
  width: 36px;
  height: 9px;
  border: 1px solid #c4c4c4;
  background: #e1e1e1;
}

.swatch svg {
  display: block;
  stroke: #f0a080;
}

.dialog .thumb {
  height: 115px;
  margin-top: 43px;
  background: #a8a8a8;
}

/* windows taskbar */
.taskbar {
  flex: none;
  height: 18px;
  display: flex;
  align-items: stretch;
  background: linear-gradient(90deg, #213c45, #1f3540 55%, #1a2542);
  color: #e4e8ec;
}

.task {
  width: 22px;
  display: flex;
  align-items: center;
  justify-content: center;
  border-bottom: 1px solid transparent;
}

.task svg {
  width: 14px;
  height: 14px;
}

.start svg {
  width: 10px;
  height: 10px;
}

.task.open {
  border-color: #76b9ed;
}

.task.current {
  background: #4b5f67;
}

.dx {
  width: 11px;
  height: 11px;
  line-height: 11px;
  background: #d9262c;
  color: #fff;
  font-weight: 700;
}

.search {
  width: 131px;
  display: flex;
  align-items: center;
  gap: 5px;
  padding-left: 5px;
  background: #323638;
}

.search input {
  flex: 1;
  min-width: 0;
}

.search input::placeholder {
  color: #c4c8c8;
}

.search .flip {
  transform: scaleX(-1);
}

.search-art {
  width: 36px;
  height: 13px;
  align-self: flex-end;
}

.tray {
  margin-left: auto;
  display: flex;
  align-items: center;
  gap: 3px;
  padding-right: 8px;
  font-size: 6px;
}

.clock {
  text-align: center;
}

.note {
  width: 14px;
  height: 14px;
}
```
FILE: script.js
```js
// сетка стола: 20x20 клеток в перспективе, каждая пятая линия ярче
const corners = [[291, 388], [657, 457], [714, 161], [378, 105]]
const cells = 20

function project(u, v) {
  const [a, b, c, d] = corners
  const dx1 = b[0] - c[0], dx2 = d[0] - c[0], sx = a[0] - b[0] + c[0] - d[0]
  const dy1 = b[1] - c[1], dy2 = d[1] - c[1], sy = a[1] - b[1] + c[1] - d[1]
  const det = dx1 * dy2 - dx2 * dy1
  const g = (sx * dy2 - dx2 * sy) / det
  const h = (dx1 * sy - sx * dy1) / det
  const w = g * u + h * v + 1
  return [
    ((b[0] - a[0] + g * b[0]) * u + (d[0] - a[0] + h * d[0]) * v + a[0]) / w,
    ((b[1] - a[1] + g * b[1]) * u + (d[1] - a[1] + h * d[1]) * v + a[1]) / w
  ]
}

function addLine(from, to, major) {
  const line = document.createElementNS("http://www.w3.org/2000/svg", "line")
  line.setAttribute("x1", from[0])
  line.setAttribute("y1", from[1])
  line.setAttribute("x2", to[0])
  line.setAttribute("y2", to[1])
  line.setAttribute("class", major ? "grid-line major" : "grid-line")
  document.getElementById("grid").appendChild(line)
}

for (let i = 1; i < cells; i++) {
  const t = i / cells
  addLine(project(t, 0), project(t, 1), i % 5 === 0)
  addLine(project(0, t), project(1, t), i % 5 === 0)
}
```
